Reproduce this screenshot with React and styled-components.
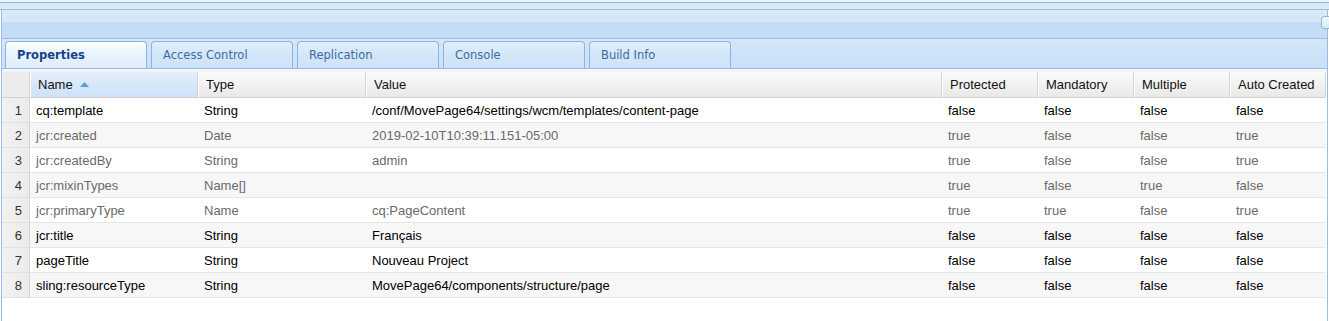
import React from 'react'
import styled, { createGlobalStyle } from 'styled-components'

const Global = createGlobalStyle`
  html, body {
    margin: 0;
    padding: 0;
    background: #fff;
    overflow: hidden;
  }
`

const Window = styled.div`
  width: 1329px;
  height: 321px;
  overflow: hidden;
  background: #fff;
  font-family: "Liberation Sans", Arial, sans-serif;
`

const TopBar = styled.div`
  height: 2px;
  background: #eef4fb;
  border-bottom: 1px solid #8fb5da;
`

const Band = styled.div`
  height: 6px;
  background: #dce9f8;
  border-bottom: 1px solid #97bde2;
`

const Panel = styled.div`
  margin-left: 1px;
  border-left: 1px solid #99bbe8;
  border-right: 1px solid #99bbe8;
  width: 1325px;
  height: 311px;
  display: flex;
  flex-direction: column;
`

const PanelHeader = styled.div`
  height: 28px;
  display: flex;
  align-items: center;
  justify-content: flex-end;
  background: linear-gradient(#dbe9f8 0%, #d4e6f8 42%, #c3dcf4 46%, #c6def5 100%);
  border-bottom: 1px solid #99bbe8;
`

const Tool = styled.div`
  width: 12px;
  height: 11px;
  margin: -4px -8px 0 0;
  border: 1px solid #8fb5da;
  border-radius: 3px;
  background: linear-gradient(#f4f9fe, #d9e9f8);
`

const TabStrip = styled.div`
  height: 27px;
  padding: 2px 0 0 3px;
  display: flex;
  align-items: flex-start;
  gap: 4px;
  background: linear-gradient(#d5e7f9, #c8e0f6);
  border-bottom: 1px solid #99bbe8;
`

const Tab = styled.div`
  width: 142px;
  height: 27px;
  margin-bottom: ${(p) => (p.$active ? '-1px' : '0')};
  border: 1px solid #8db2e3;
  border-bottom: none;
  border-radius: 4px 4px 0 0;
  background: ${(p) => (p.$active
    ? 'linear-gradient(#ffffff, #eaf4fd 40%, #deedfb)'
    : 'linear-gradient(#e3effb, #d4e7f9 45%, #cde3f8)')};
  display: flex;
  align-items: center;
  padding: 0 0 1px 11px;
  box-sizing: border-box;
  font-family: "DejaVu Sans", Tahoma, sans-serif;
  font-size: 11.5px;
  font-weight: ${(p) => (p.$active ? 700 : 400)};
  color: ${(p) => (p.$active ? '#15428b' : '#416aa3')};
`

const Gap = styled.div`
  height: 3px;
  background: linear-gradient(#f7f7f7, #f2f2f2);
`

const Grid = styled.div`
  display: grid;
  grid-template-columns: 28px 168px 168px 576px 96px 96px 96px 96px;
`

const HeaderCell = styled.div`
  height: 26px;
  display: flex;
  align-items: center;
  padding-left: 7px;
  gap: 7px;
  box-sizing: border-box;
  font-size: 13px;
  color: #111;
  border-right: 1px solid #d4d4d4;
  border-left: 1px solid #fff;
  border-bottom: 1px solid #d0d0d0;
  background: ${(p) => (p.$sorted
    ? 'linear-gradient(#e6f0fb, #d7e7f9 50%, #cfe2f7)'
    : 'linear-gradient(#fafafa, #f1f1f1 50%, #e9e9e9)')};
`

const Numberer = styled.div`
  height: ${(p) => (p.$head ? '26px' : '25px')};
  box-sizing: border-box;
  background: ${(p) => (p.$head ? '#ececec' : 'linear-gradient(90deg, #f2f2f2, #ebebeb)')};
  border-right: 1px solid #d4d4d4;
  border-bottom: 1px solid ${(p) => (p.$head ? '#d0d0d0' : '#e2e2e2')};
  display: flex;
  align-items: center;
  justify-content: flex-end;
  padding-right: 7px;
  font-size: 13px;
  color: #333;
`

const Cell = styled.div`
  height: 25px;
  box-sizing: border-box;
  display: flex;
  align-items: center;
  padding-left: 6px;
  font-size: 13px;
  white-space: nowrap;
  color: ${(p) => (p.$muted ? '#6a6a6a' : '#000')};
  background: ${(p) => (p.$alt ? '#f8f7f8' : '#fff')};
  border-bottom: 1px solid #e6e6e6;
`

const SortArrow = () => (
  <svg width="9" height="5" viewBox="0 0 9 5">
    <path d="M0 5 L4.5 0 L9 5 Z" fill="#5b9bd5" />
  </svg>
)

const tabs = ['Properties', 'Access Control', 'Replication', 'Console', 'Build Info']

const columns = ['Name', 'Type', 'Value', 'Protected', 'Mandatory', 'Multiple', 'Auto Created']

const rows = [
  ['cq:template', 'String', '/conf/MovePage64/settings/wcm/templates/content-page', 'false', 'false', 'false', 'false'],
  ['jcr:created', 'Date', '2019-02-10T10:39:11.151-05:00', 'true', 'false', 'false', 'true'],
  ['jcr:createdBy', 'String', 'admin', 'true', 'false', 'false', 'true'],
  ['jcr:mixinTypes', 'Name[]', '', 'true', 'false', 'true', 'false'],
  ['jcr:primaryType', 'Name', 'cq:PageContent', 'true', 'true', 'false', 'true'],
  ['jcr:title', 'String', 'Français', 'false', 'false', 'false', 'false'],
  ['pageTitle', 'String', 'Nouveau Project', 'false', 'false', 'false', 'false'],
  ['sling:resourceType', 'String', 'MovePage64/components/structure/page', 'false', 'false', 'false', 'false'],
]

export default function App() {
  return (
    <>
      <Global />
      <Window>
        <TopBar />
        <Band />
        <Panel>
          <PanelHeader>
            <Tool />
          </PanelHeader>
          <TabStrip>
            {tabs.map((t, i) => <Tab key={t} $active={i === 0}>{t}</Tab>)}
          </TabStrip>
          <Gap />
          <Grid>
            <Numberer $head />
            {columns.map((c, i) => (
              <HeaderCell key={c} $sorted={i === 0}>
                {c}
                {i === 0 && <SortArrow />}
              </HeaderCell>
            ))}
            {rows.map((r, ri) => {
              const muted = r[3] === 'true'
              const alt = ri % 2 === 1
              return (
                <React.Fragment key={r[0]}>
                  <Numberer>{ri + 1}</Numberer>
                  {r.map((v, ci) => (
                    <Cell key={ci} $muted={muted} $alt={alt}>{v}</Cell>
                  ))}
                </React.Fragment>
              )
            })}
          </Grid>
        </Panel>
      </Window>
    </>
  )
}
